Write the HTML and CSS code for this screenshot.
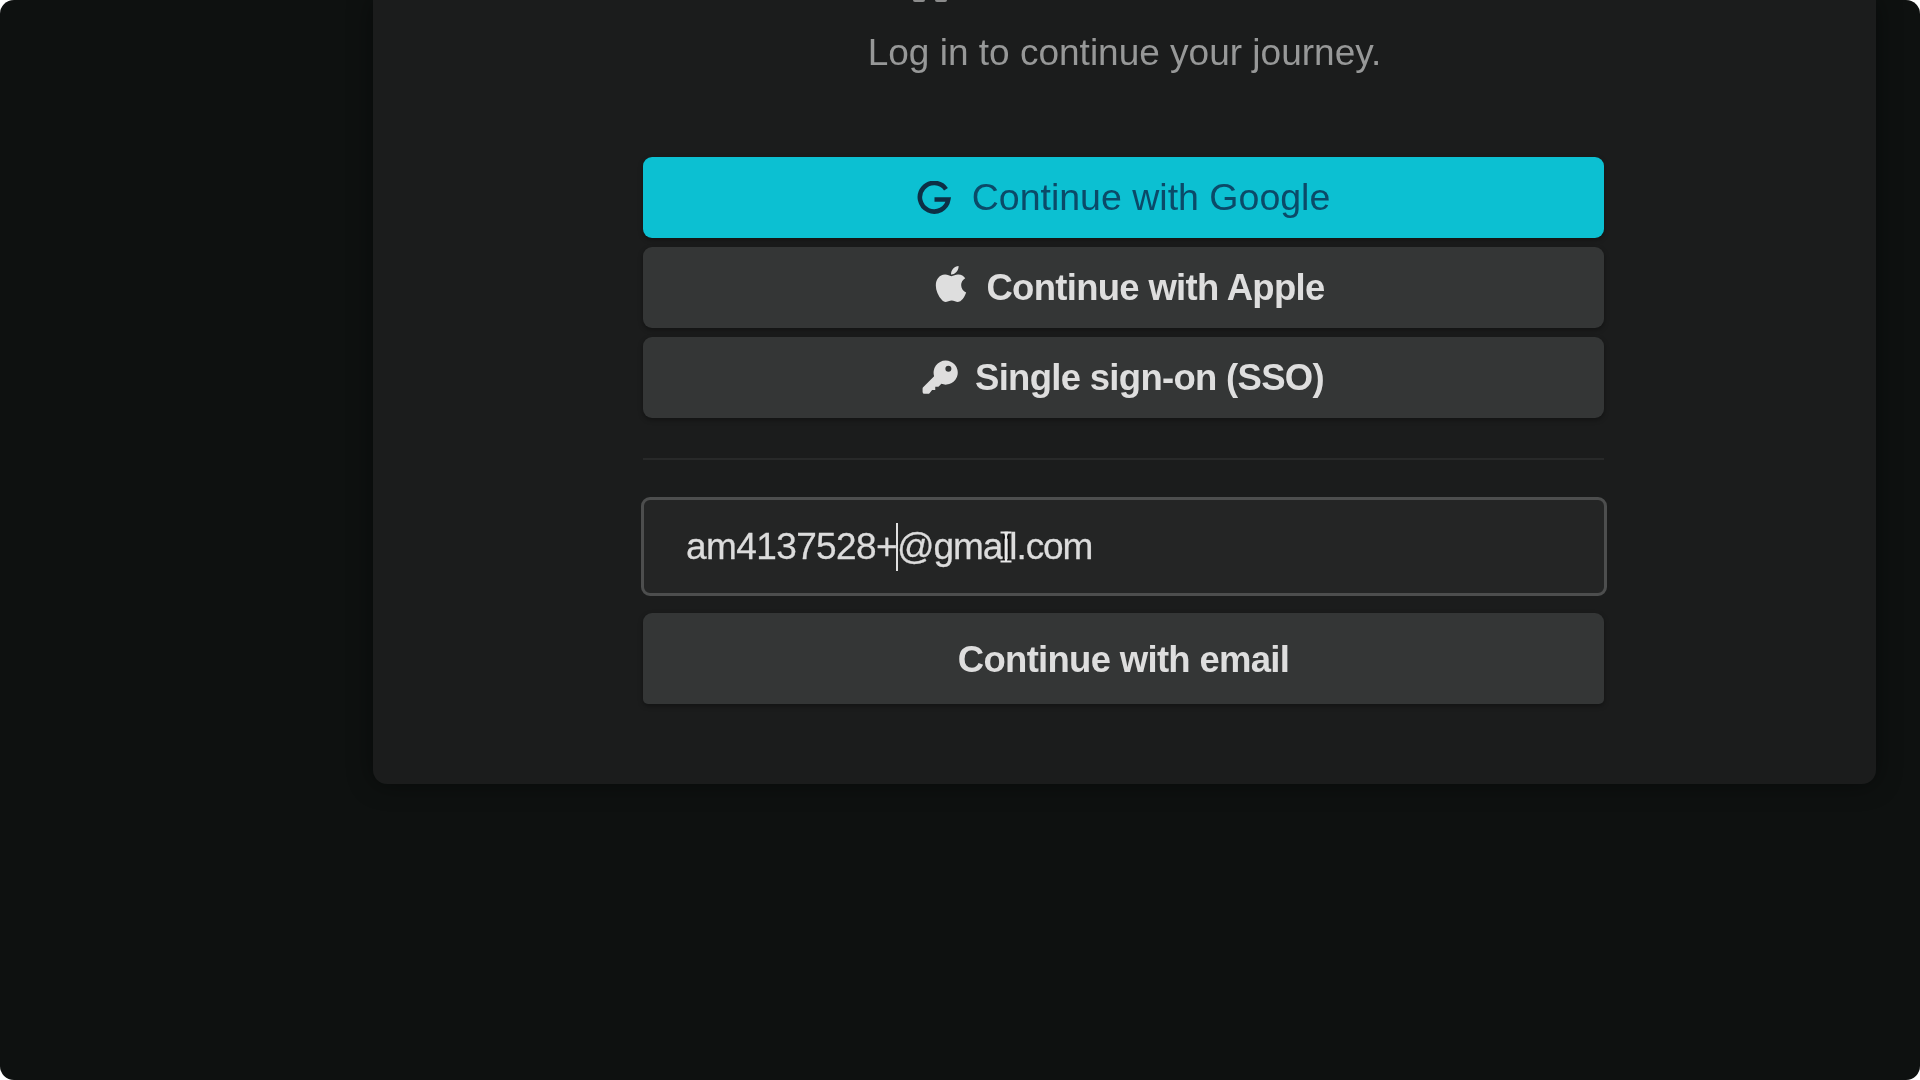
FILE: index.html
```html
<!DOCTYPE html>
<html lang="en">
<head>
<meta charset="utf-8">
<title>Log in</title>
<link rel="stylesheet" href="styles.css">
</head>
<body>
<main class="stage">
  <section class="card">
    <div class="heading-tips"><span class="tip"></span><span class="tip"></span></div>
    <p class="subtitle">Log in to continue your journey.</p>
    <div class="form">
      <div class="stack">
        <button class="btn btn-google" type="button">
          <svg class="icon icon-g" viewBox="0 0 34 34" aria-hidden="true"><path d="M29 8.2A14.3 14.3 0 1 0 31.3 18.5H17.5" fill="none" stroke="currentColor" stroke-width="4.6"/></svg>
          <span>Continue with Google</span>
        </button>
        <button class="btn btn-apple" type="button">
          <svg class="icon icon-apple" viewBox="0 0 24 24" aria-hidden="true"><path fill="currentColor" d="M17.05 20.28c-.98.95-2.05.8-3.08.35-1.09-.46-2.09-.48-3.24 0-1.44.62-2.2.44-3.06-.35C2.79 15.25 3.51 7.59 9.05 7.31c1.35.07 2.29.74 3.08.8 1.18-.24 2.31-.93 3.57-.84 1.51.12 2.65.72 3.4 1.8-3.12 1.87-2.38 5.98.48 7.13-.57 1.5-1.31 2.99-2.54 4.09zM12.03 7.25c-.15-2.23 1.66-4.07 3.74-4.25.29 2.58-2.34 4.5-3.74 4.25z"/></svg>
          <span>Continue with Apple</span>
        </button>
        <button class="btn btn-sso" type="button">
          <svg class="icon icon-key" viewBox="0 0 24 24" aria-hidden="true"><path fill="currentColor" fill-rule="evenodd" d="M15.5 1a7.6 7.6 0 1 1-2.6 14.7L11 17.6H9v2H7l-1.6 2a1.2 1.2 0 0 1-.9.4H2.200a1.200 1.200 0 0 1-1.200-1.200v-2.100a1.200 1.200 0 0 1 .35-.85L8.300 10.900A7.600 7.600 0 0 1 15.500 1zM17.300 4.200a1.900 1.900 0 1 0 0 3.800 1.900 1.900 0 0 0 0-3.800z"/></svg>
          <span>Single sign-on (SSO)</span>
        </button>
      </div>
      <hr class="divider">
      <div class="input"><span class="input-text">am4137528+<span class="caret"></span><span class="input-tail">@gma<span class="pointer-anchor">i<svg class="ibeam" viewBox="0 0 14 32" aria-hidden="true"><path d="M1.500 1.500h11M7 1.500v29M1.500 30.500h11" fill="none" stroke="#e8e8e8" stroke-width="2"/><path d="M4.500 3v26M9.500 3v26" fill="none" stroke="#111" stroke-width="1.500"/></svg></span>l.com</span></span></div>
      <button class="btn btn-email" type="button"><span>Continue with email</span></button>
    </div>
  </section>
</main>
</body>
</html>
```
FILE: styles.css
```css
* { box-sizing: border-box; }
html, body { margin: 0; height: 100%; background: #fff; overflow: hidden; }
body { font-family: "Liberation Sans", Arial, sans-serif; }

.stage {
  width: 1920px;
  height: 1080px;
  padding-left: 373px;
  background: #0e1110;
  border-radius: 14px;
  overflow: hidden;
}

.card {
  width: 1503px;
  height: 784px;
  background: #1b1c1c;
  border-radius: 0 0 14px 14px;
  box-shadow: 0 0 26px rgba(0, 0, 0, .45);
}

.heading-tips {
  display: flex;
  gap: 10px;
  height: 2px;
  padding-left: 540px;
  filter: blur(.7px);
}
.tip { width: 12px; height: 2px; background: #8c8c8c; border-radius: 0 0 4px 4px; }

.subtitle {
  margin: 31px 0 0;
  height: 40px;
  font-size: 37px;
  line-height: 40px;
  text-align: center;
  color: #979898;
  filter: blur(.7px);
}

.form {
  width: 961px;
  margin: 84px 0 0 270px;
  display: flex;
  flex-direction: column;
}

.stack { display: flex; flex-direction: column; gap: 9px; }

.btn {
  display: flex;
  align-items: center;
  justify-content: center;
  gap: 16px;
  width: 100%;
  height: 81px;
  padding: 0;
  border: 0;
  border-radius: 9px;
  background: #343636;
  color: #dedede;
  font-family: inherit;
  font-size: 36.5px;
  font-weight: 700;
  letter-spacing: -.7px;
  box-shadow: 0 2px 5px rgba(0, 0, 0, .35);
}
.btn > span { filter: blur(.7px); }

.btn-google { gap: 21px; background: #0cc0d2; color: #0b4a68; font-size: 37.5px; font-weight: 400; letter-spacing: 0; }
.btn-apple { gap: 11px; padding-left: 5px; }
.btn-sso { gap: 16px; padding-right: 2px; }
.btn-email { height: 91px; margin-top: 17px; padding-top: 2px; border-radius: 9px 9px 5px 5px; }

.icon { flex: none; filter: blur(.5px); }
.icon-g { width: 34px; height: 34px; color: #0d2f45; }
.icon-apple { width: 48px; height: 48px; margin-bottom: 8px; }
.icon-key { width: 38px; height: 38px; }

.divider {
  width: 100%;
  height: 2px;
  margin: 40px 0 37px;
  border: 0;
  background: #282929;
}

.input {
  display: flex;
  align-items: center;
  height: 99px;
  margin: 0 -3px 0 -2px;
  padding: 0 42px;
  border: 3px solid #4d4e4e;
  border-radius: 9px;
  background: #242525;
  color: #dcdcdc;
  font-size: 37px;
  letter-spacing: -.6px;
  white-space: pre;
  -webkit-text-stroke: .3px currentColor;
}

.input-text { display: flex; align-items: center; filter: blur(.5px); }
.input-tail { letter-spacing: -1.1px; }

.caret { width: 2px; height: 48px; margin: 0 -1px; background: #e0e0e0; }

.pointer-anchor { position: relative; }
.ibeam {
  position: absolute;
  left: -3px;
  top: 5px;
  width: 14px;
  height: 32px;
}
```
